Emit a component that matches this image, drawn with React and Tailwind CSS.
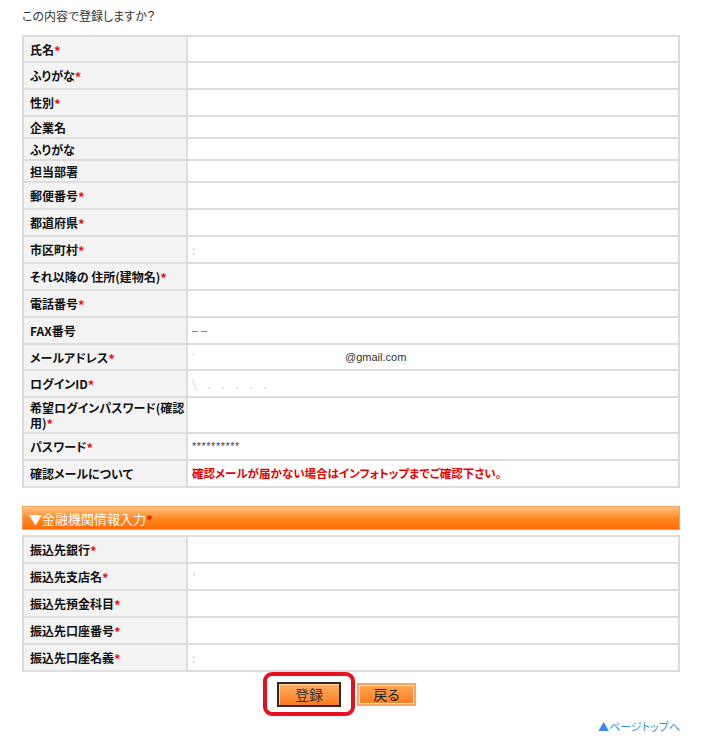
import React from "react";

const rows = [
  { label: "氏名", req: true, h: "h-[26px]" },
  { label: "ふりがな", req: true },
  { label: "性別", req: true },
  { label: "企業名", h: "h-[22px]" },
  { label: "ふりがな", h: "h-[22px]" },
  { label: "担当部署", h: "h-[22px]" },
  { label: "郵便番号", req: true },
  { label: "都道府県", req: true },
  { label: "市区町村", req: true, value: <span className="text-[#c8c8c8]">:</span> },
  { label: "それ以降の 住所(建物名)", req: true },
  { label: "電話番号", req: true },
  { label: "FAX番号", value: <span className="text-[#666] font-['Liberation_Sans',sans-serif] text-[11px]">– –</span> },
  {
    label: "メールアドレス",
    req: true,
    h: "h-[26px]",
    value: (
      <span className="flex items-center font-['Liberation_Sans',sans-serif] text-[11px] text-[#333]">
        <span className="w-[153px] text-[#d0d0d0]">'</span>
        @gmail.com
      </span>
    ),
  },
  { label: "ログインID", req: true, value: <span className="text-[#d4d4d4] tracking-[4px]">\ . . . . .</span> },
  { label: "希望ログインパスワード(確認", label2: "用)", req: true, h: "h-[36px]" },
  { label: "パスワード", req: true, value: <span className="font-['Liberation_Sans',sans-serif] text-[11px] text-[#444] tracking-[0.5px]">**********</span> },
  {
    label: "確認メールについて",
    value: <span className="font-bold text-[#e60000] text-[11.5px]">確認メールが届かない場合はインフォトップまでご確認下さい。</span>,
  },
];

const bankRows = [
  { label: "振込先銀行", req: true },
  { label: "振込先支店名", req: true, value: <span className="text-[#d0d0d0]">'</span> },
  { label: "振込先預金科目", req: true },
  { label: "振込先口座番号", req: true },
  { label: "振込先口座名義", req: true, value: <span className="text-[#c8c8c8]">:</span> },
];

function Req() {
  return <span className="text-[#ee1111] font-bold text-[13px] leading-none relative top-[1px]">*</span>;
}

function Row({ row }) {
  const h = row.h || "h-[27px]";
  return (
    <div className={`flex ${h} border-b-2 border-[#dddddd]`}>
      <div className="w-[164px] shrink-0 bg-[#f3f3f3] border-r-2 border-[#dddddd] pl-[6px] flex items-center font-bold text-[12px] text-[#111] leading-[15px]">
        {row.label2 ? (
          <div className="flex flex-col">
            <span>{row.label}</span>
            <span>
              {row.label2}
              <Req />
            </span>
          </div>
        ) : (
          <span>
            {row.label}
            {row.req && <Req />}
          </span>
        )}
      </div>
      <div className="flex-1 bg-white pl-[4px] flex items-center text-[12px]">{row.value}</div>
    </div>
  );
}

export default function App() {
  return (
    <div className="w-[717px] h-[746px] bg-white text-[#333] font-['Noto_Sans_CJK_JP','Noto_Sans',sans-serif] [font-feature-settings:'palt'] text-[12px]">
      <div className="pl-[22px] pt-[9px] leading-[14px] text-[12px] text-[#333]">この内容で登録しますか？</div>

      {/* 登録情報 */}
      <div className="ml-[22px] mt-[12px] w-[658px] border-t-2 border-l-2 border-r-2 border-[#dddddd]">
        {rows.map((r, i) => (
          <Row key={i} row={r} />
        ))}
      </div>

      {/* 金融機関 header */}
      <div className="ml-[22px] mt-[18px] w-[658px] h-[24px] border border-[#f2a35e] bg-gradient-to-b from-[#ffc27c] via-[#ff8a22] to-[#ff6a00] flex items-center pl-[6px] text-white text-[13px] leading-none">
        ▼金融機関情報入力
        <span className="text-[#ee1111] text-[13px] font-bold relative top-[1px]">*</span>
      </div>

      <div className="ml-[22px] mt-[5px] w-[658px] border-t-2 border-l-2 border-r-2 border-[#dddddd]">
        {bankRows.map((r, i) => (
          <Row key={i} row={r} />
        ))}
      </div>

      {/* buttons */}
      <div className="flex items-center pl-[263px]">
        <div className="w-[92px] h-[44px] border-[4px] border-[#e8101e] rounded-[9px] flex items-center pl-[10px]">
          <button className="w-[64px] h-[25px] border-2 border-[#2a2a2a] bg-gradient-to-b from-[#ffb060] to-[#ff7a18] shadow-[inset_1px_1px_0_#ffd2a0] text-[14px] text-[#333] leading-none">
            登録
          </button>
        </div>
        <button className="ml-[2px] w-[59px] h-[23px] border-2 border-[#f0a868] bg-gradient-to-b from-[#ffa850] to-[#ff7a1c] shadow-[inset_0_0_0_1px_#ffe0c0] text-[14px] text-[#222] leading-none">
          戻る
        </button>
      </div>

      <div className="w-[680px] flex justify-end mt-[3px]">
        <a className="text-[11px] text-[#3a8ee6] leading-[14px]">▲ページトップへ</a>
      </div>
    </div>
  );
}
